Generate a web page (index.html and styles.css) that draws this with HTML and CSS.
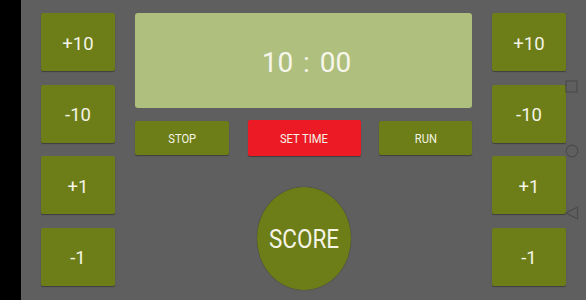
FILE: index.html
```html
<!DOCTYPE html>
<html>
<head>
<meta charset="utf-8">
<link rel="stylesheet" href="styles.css">
</head>
<body>
<div class="screen">
  <div class="bezel"></div>
  <div class="app">
    <div class="col side">
      <div class="btn big"><span>+10</span></div>
      <div class="btn big"><span>-10</span></div>
      <div class="btn big"><span>+1</span></div>
      <div class="btn big"><span>-1</span></div>
    </div>
    <div class="col middle">
      <div class="display"><span class="time">10 : 00</span></div>
      <div class="controls">
        <div class="btn small stop"><span>STOP</span></div>
        <div class="btn small settime"><span>SET TIME</span></div>
        <div class="btn small run"><span>RUN</span></div>
      </div>
      <div class="score"><span>SCORE</span></div>
    </div>
    <div class="col side">
      <div class="btn big"><span>+10</span></div>
      <div class="btn big"><span>-10</span></div>
      <div class="btn big"><span>+1</span></div>
      <div class="btn big"><span>-1</span></div>
    </div>
    <div class="navbar">
      <svg class="nav sq" width="13" height="13" viewBox="0 0 13 13"><rect x="1" y="1" width="11" height="11" fill="none" stroke="#4b4b4b" stroke-width="1.2"/></svg>
      <svg class="nav ci" width="14" height="14" viewBox="0 0 14 14"><circle cx="7" cy="7" r="5.8" fill="none" stroke="#4b4b4b" stroke-width="1.2"/></svg>
      <svg class="nav tr" width="14" height="14" viewBox="0 0 14 14"><path d="M1 7 L12.5 1 L12.5 13 Z" fill="none" stroke="#4b4b4b" stroke-width="1.2" stroke-linejoin="round"/></svg>
    </div>
  </div>
</div>
</body>
</html>
```

FILE: styles.css
```css
* { box-sizing: border-box; }
html, body { margin: 0; padding: 0; }
body {
  width: 586px;
  height: 300px;
  overflow: hidden;
  background: #5f5f5f;
  font-family: Roboto, "Liberation Sans", sans-serif;
  color: #f4f4e6;
}
.screen {
  display: flex;
  width: 586px;
  height: 300px;
}
.bezel {
  width: 21px;
  background: #000;
  flex: none;
}
.app {
  position: relative;
  flex: 1;
  display: flex;
  gap: 20px;
  padding: 13px 20px 0 20px;
  background: #5f5f5f;
}
.col.side {
  width: 74px;
  display: flex;
  flex-direction: column;
  gap: 13.67px;
}
.btn {
  background: #6d7d17;
  border-radius: 2px;
  box-shadow: 0 1px 1px rgba(0,0,0,0.35);
  display: flex;
  align-items: center;
  justify-content: center;
}
.btn.big {
  height: 58px;
  font-size: 18.5px;
  padding-top: 3px;
}
.col.middle {
  width: 337px;
  display: flex;
  flex-direction: column;
  align-items: center;
}
.display {
  width: 100%;
  height: 95px;
  background: #afbf7e;
  border-radius: 3px;
  display: flex;
  align-items: center;
  justify-content: center;
  font-size: 28px;
  padding-top: 4px;
  padding-left: 6px;
  color: #f6f6ea;
}
.time { word-spacing: 3px; }
.controls {
  width: 100%;
  height: 34px;
  margin-top: 13px;
  display: flex;
  align-items: center;
  justify-content: space-between;
}
.btn.small {
  height: 34px;
  font-size: 13px;
}
.btn.small span, .score span {
  display: inline-block;
  transform: scaleX(0.86);
}
.stop { width: 94px; }
.run { width: 93px; }
.settime {
  width: 113px;
  height: 36px !important;
  background: #ec1a25;
}
.score {
  margin-top: 32px;
  width: 94px;
  height: 103px;
  border-radius: 50%;
  background: #6d7d17;
  box-shadow: 0 0 1px rgba(0,0,0,0.5);
  display: flex;
  align-items: center;
  justify-content: center;
  font-size: 25px;
  padding-top: 2px;
}
.score span { transform: scaleX(0.9); }
.navbar {
  position: absolute;
  left: 544px;
  top: 0;
  width: 14px;
  height: 300px;
}
.nav { position: absolute; left: 0; }
.nav.sq { top: 80px; }
.nav.ci { top: 144px; }
.nav.tr { top: 206px; }
```
